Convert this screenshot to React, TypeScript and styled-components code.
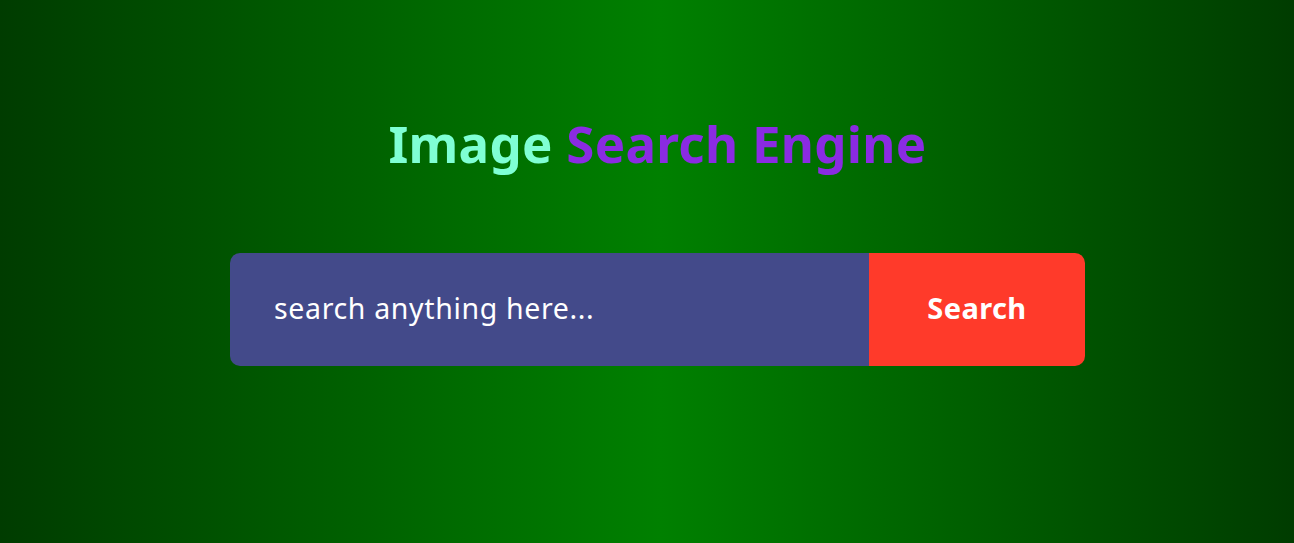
import { createGlobalStyle, styled } from "styled-components";

const GlobalStyle = createGlobalStyle`
    * {
        box-sizing: border-box;
    }
    html, body {
        margin: 0;
        padding: 0;
        height: 100%;
    }
    body {
        font-family: "Noto Sans", "Open Sans", sans-serif;
        background: linear-gradient(90deg, #003c00 0%, #008000 51%, #003c00 100%);
        min-height: 543px;
    }
`;

const Wrapper = styled.div`
    display: flex;
    flex-direction: column;
    align-items: center;
    padding-top: 104px;
    padding-left: 21px;
`;

const Title = styled.h1`
    margin: 0;
    font-size: 51px;
    font-weight: 700;
    line-height: 78px;
    color: #7fffd4;
    letter-spacing: 0.3px;
    span {
        color: #8a2be2;
    }
`;

const Form = styled.form`
    margin-top: 71px;
    display: flex;
    width: 855px;
    height: 113px;
    border-radius: 10px;
    overflow: hidden;
`;

const Input = styled.input`
    flex: 1;
    border: none;
    outline: none;
    background: #434a8a;
    color: #fff;
    font-family: inherit;
    font-size: 28.5px;
    letter-spacing: 0.65px;
    padding: 0 44px 4px;
    &::placeholder {
        color: #fff;
    }
`;

const Button = styled.button`
    width: 216px;
    border: none;
    background: #ff3a2a;
    color: #fff;
    font-family: inherit;
    font-size: 29px;
    font-weight: 700;
    letter-spacing: 0.4px;
    padding: 0 0 4px;
    cursor: pointer;
    &:hover {
        opacity: 0.9;
    }
`;

export default function App() {
    return (
        <>
            <GlobalStyle />
            <Wrapper>
                <Title>Image <span>Search Engine</span></Title>
                <Form onSubmit={(e) => e.preventDefault()}>
                    <Input type="text" placeholder="search anything here..." />
                    <Button type="submit">Search</Button>
                </Form>
            </Wrapper>
        </>
    );
}
